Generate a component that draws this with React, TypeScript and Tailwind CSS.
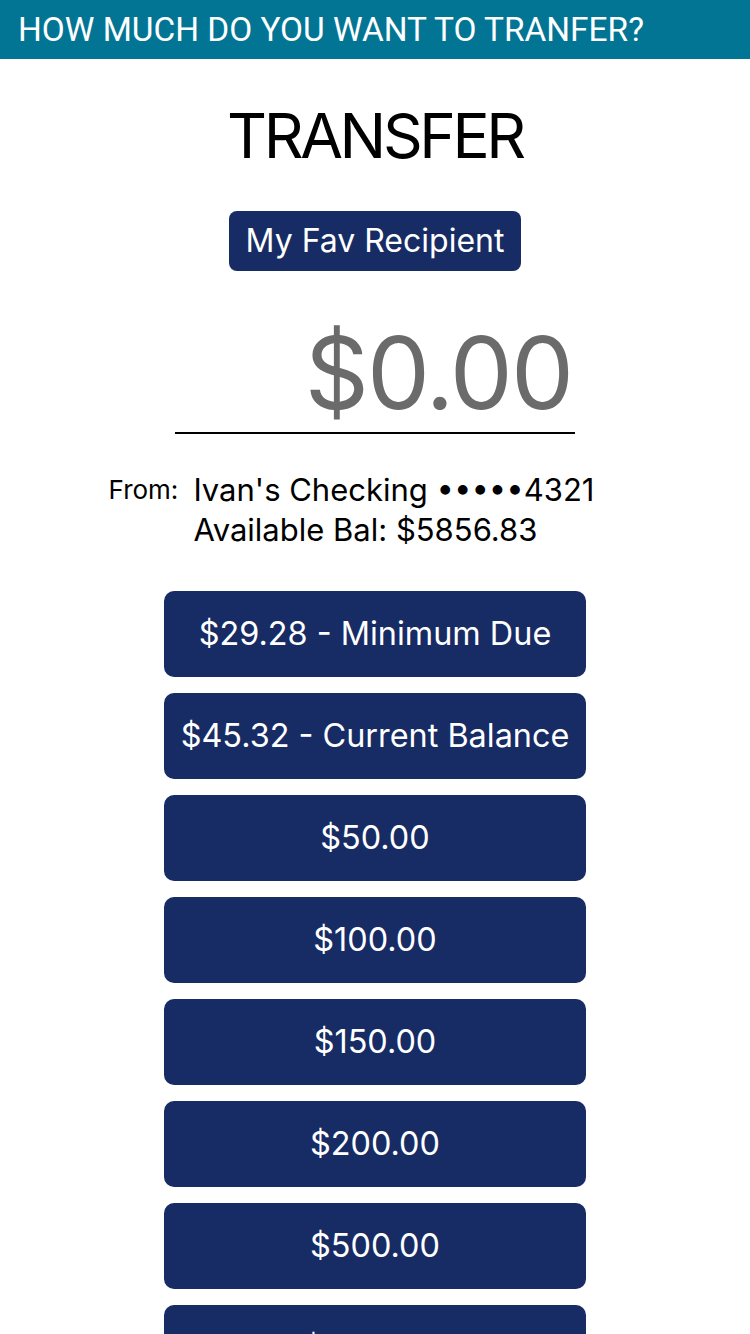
import React from "react";

const amounts = [
  "$29.28 - Minimum Due",
  "$45.32 - Current Balance",
  "$50.00",
  "$100.00",
  "$150.00",
  "$200.00",
  "$500.00",
  "$1000.00",
];

export default function App() {
  return (
    <div className="w-[750px] h-[1334px] overflow-hidden bg-white" style={{ fontFamily: "Inter, 'Noto Sans', sans-serif" }}>
      <div className="h-[59px] bg-[#037594] flex items-center px-[18px]">
        <span className="text-white text-[33.4px] leading-none" style={{ fontFamily: "Roboto, sans-serif" }}>
          HOW MUCH DO YOU WANT TO TRANFER?
        </span>
      </div>
      <div className="flex flex-col items-center">
        <div className="mt-[39px] text-[62px] leading-[76px] tracking-[-3.4px] text-black">TRANSFER</div>
        <button className="mt-[37px] h-[60px] px-[17px] rounded-[8px] bg-[#172c64] text-white text-[32px] leading-none">
          My Fav Recipient
        </button>
        <div className="mt-[43px] w-[400px] border-b-2 border-black text-right text-[#6b6b6b] text-[100px] leading-[118px] tracking-[-2px] pr-[3px]">
          $0.00
        </div>
        <div className="mt-[36px] mr-[47px] flex items-start">
          <span className="text-[26px] leading-[40px] text-black mr-[15px]">From:</span>
          <div className="flex flex-col text-[31px] leading-[40px] text-black">
            <span>Ivan's Checking •••••4321</span>
            <span>Available Bal: $5856.83</span>
          </div>
        </div>
        <div className="mt-[41px] flex flex-col gap-[16px]">
          {amounts.map((a) => (
            <button
              key={a}
              className="w-[422px] h-[86px] rounded-[10px] bg-[#172c64] text-white text-[32.4px] flex items-center justify-center"
            >
              {a}
            </button>
          ))}
        </div>
      </div>
    </div>
  );
}
